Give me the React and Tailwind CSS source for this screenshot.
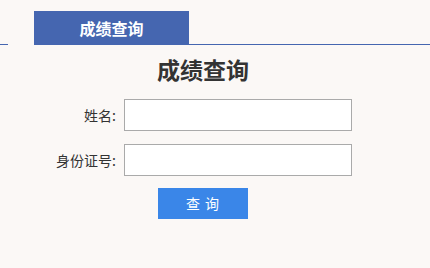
import React from "react";

export default function App() {
  const font = { fontFamily: '"Noto Sans CJK SC", "Noto Sans", sans-serif' };
  return (
    <div className="min-h-[268px] w-full bg-[#fbf8f6]" style={font}>
      {/* Tab bar */}
      <div className="flex items-end pt-[11px]">
        <div className="w-[8px] border-b border-[#4566b0]" />
        <div className="w-[26px]" />
        <div className="w-[155px] h-[34px] bg-[#4566b0] text-white font-bold text-[16px] flex items-center justify-center">
          成绩查询
        </div>
        <div className="flex-1 border-b border-[#4566b0]" />
      </div>

      {/* Title */}
      <h1 className="w-[406px] mt-[9px] text-center text-[23px] leading-[30px] font-bold text-[#333]">
        成绩查询
      </h1>

      {/* Form */}
      <div className="mt-[15px] flex flex-col gap-[13px]">
        <div className="flex items-center">
          <label className="w-[116px] text-right text-[14px] text-[#333]">姓名:</label>
          <input
            type="text"
            className="ml-[8px] w-[228px] h-[32px] bg-white border border-[#aaa] outline-none px-2 text-[13px]"
          />
        </div>
        <div className="flex items-center">
          <label className="w-[116px] text-right text-[14px] text-[#333]">身份证号:</label>
          <input
            type="text"
            className="ml-[8px] w-[228px] h-[32px] bg-white border border-[#aaa] outline-none px-2 text-[13px]"
          />
        </div>
      </div>

      <button className="mt-[12px] ml-[158px] w-[90px] h-[31px] bg-[#3a86e8] text-white text-[14px] tracking-[1px] flex items-center justify-center">
        查 询
      </button>
    </div>
  );
}
